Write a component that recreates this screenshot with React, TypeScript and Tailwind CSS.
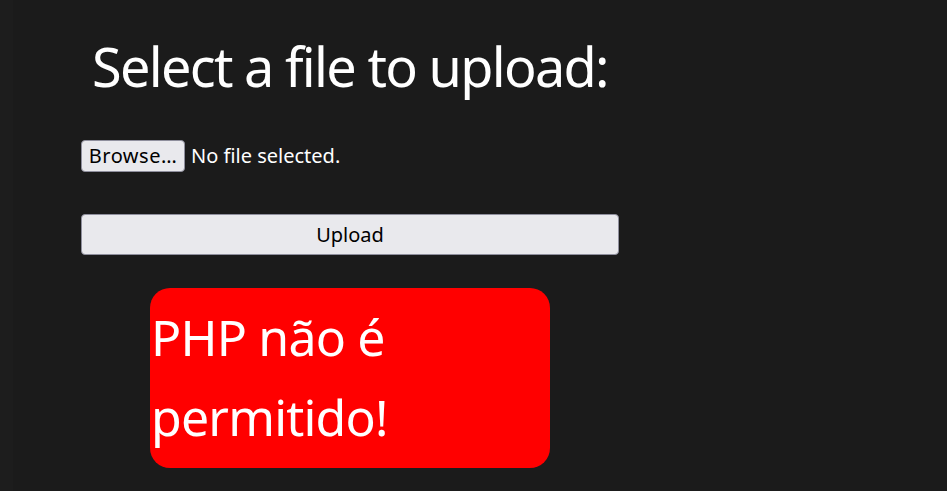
import React from "react";

export default function App() {
  return (
    <div className="min-h-[491px] w-full bg-[#1b1b1b] flex" style={{ fontFamily: '"Noto Sans", sans-serif' }}>
      <div className="w-[13px] shrink-0 bg-[#1d1d1d]" />
      <div className="flex flex-col pl-[68px] pt-[31px]">
        <h1 className="ml-[11px] text-[54px] leading-[70px] text-white font-normal tracking-[-1.7px]">
          Select a file to upload:
        </h1>
        <div className="mt-[39px] flex items-center gap-[6px]">
          <button className="h-[32px] w-[104px] rounded-[4px] border border-[#8f8f9d] bg-[#e9e9ed] text-[20px] text-black leading-none tracking-[0.5px]">
            Browse…
          </button>
          <span className="text-[20px] text-white">No file selected.</span>
        </div>
        <button className="mt-[42px] w-[538px] h-[41px] rounded-[4px] border border-[#8f8f9d] bg-[#e9e9ed] text-[20px] text-black">
          Upload
        </button>
        <div className="ml-[69px] mt-[33px] w-[400px] h-[180px] rounded-[20px] bg-[#ff0000] pl-[1px] pt-[9px] text-white text-[50px] leading-[80px] tracking-[-0.8px]">
          PHP não é permitido!
        </div>
      </div>
    </div>
  );
}
